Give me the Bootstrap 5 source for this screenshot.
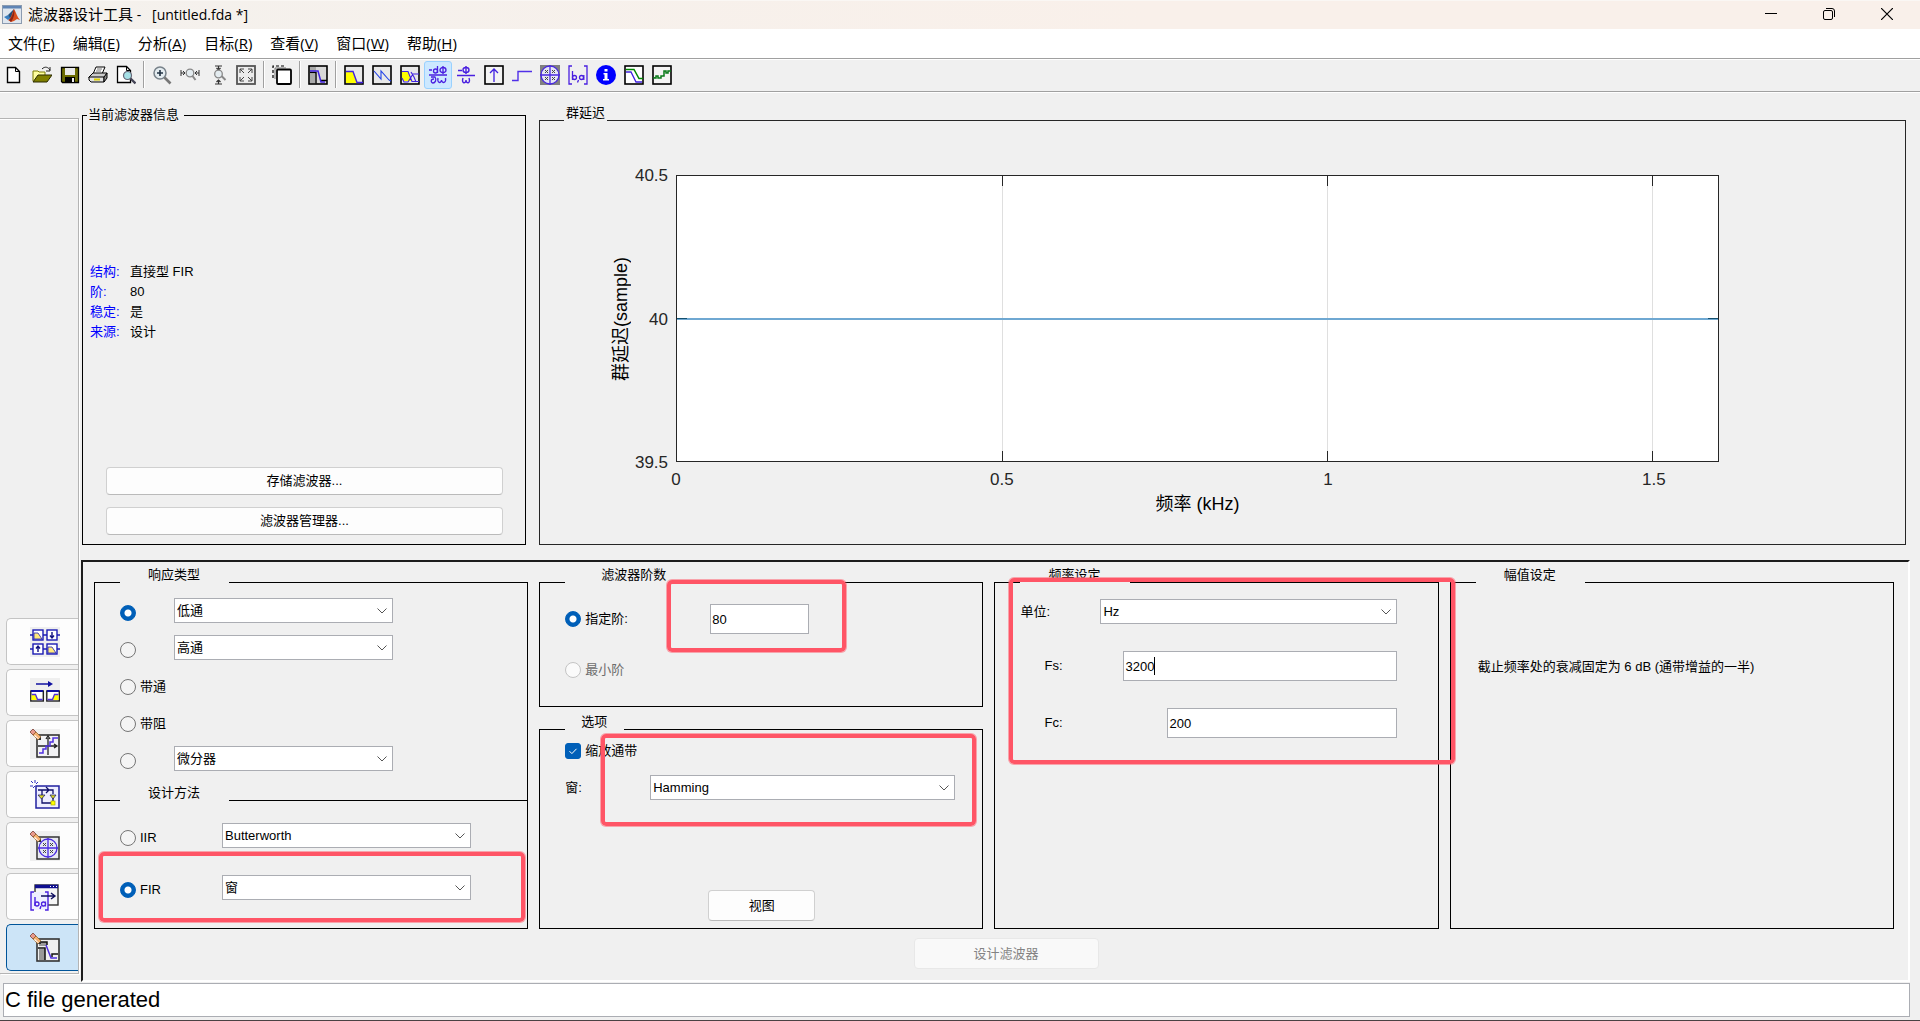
<!DOCTYPE html>
<html lang="zh-CN">
<head>
<meta charset="utf-8">
<meta name="viewport" content="width=device-width, initial-scale=1">
<title>滤波器设计工具 - [untitled.fda *]</title>
<link href="https://cdn.jsdelivr.net/npm/bootstrap@5.3.0/dist/css/bootstrap.min.css" rel="stylesheet">
<style>
:root { --face:#f0f0f0; --ink:#000; --edge:#abadb3; --accent:#005fb8; --mark:#ff5566; }
body { background:var(--face); color:var(--ink); font:13px/16px "Liberation Sans","Noto Sans CJK SC",sans-serif; }
svg { display:block; flex:none; }
.titlebar { height:29px; padding-left:2px; background:linear-gradient(90deg,#f4f1ed,#f9f0ea 60%); font:15px/24px "Open Sans","Noto Sans CJK SC",sans-serif; border-top:1px solid #faf7f4; }
.caption { padding:0 0 2px 6px; }
.caption span { font-size:14px; }
.win-btn { width:58px; height:28px; border:0; background:none; padding:0 0 2px; display:flex; align-items:center; justify-content:center; }
.menubar { height:29px; padding-left:8px; gap:18px; background:#fff; font:15px/29px "Open Sans","Noto Sans CJK SC",sans-serif; }
.menubar a { color:#000; text-decoration:none; }
.toolstrip { height:34px; border-top:1px solid #a0a0a0; border-bottom:1px solid #a0a0a0; box-shadow:inset 0 1px #fff, 0 1px #fff; padding-top:2px; margin-bottom:1px; }
.tool { width:28px; height:28px; padding:0 0 1px; border:1px solid transparent; border-radius:3px; background:none; display:flex; align-items:center; justify-content:center; }
.tool.active { background:#cce8ff; border-color:#99d1ff; }
.tool-sep { width:8px; height:27px; background:linear-gradient(#a0a0a0,#a0a0a0) 3px 0/1px 100% no-repeat, linear-gradient(#fff,#fff) 4px 0/1px 100% no-repeat; }
.rail { width:79px; margin:25px 2px 8px 0; padding:0 0 2px 6px; gap:4px; border:1px solid #b4b4b4; border-left:0; box-shadow:inset 0 1px #fff, 1px 1px #fff; }
.rail-btn { height:47px; padding:0 0 0 23px; border:1px solid #c4c4c4; border-right:0; border-radius:5px 0 0 5px; background:#fdfdfd; display:flex; align-items:center; }
.rail-btn.active { background:#cce4f7; border-color:#005499; }
fieldset.group { border:1px solid #000; display:flex; flex-direction:column; padding:0 0 0 25px; }
.group > legend { float:none; width:auto; margin:0; padding:0 29px 14px 28px; font-size:13px; line-height:14px; }
.group > legend.tight { padding-left:16px; padding-right:17px; }
.group > legend.wide { padding-left:36px; }
.top-row { padding:13px 14px 15px 1px; gap:13px; }
fieldset.info, fieldset.plot { padding:0; }
.info { flex:443 1 0; margin-top:2px; }
.info > legend { margin-left:4px; padding:0 5px 0 1px; }
.plot { flex:1368 1 0; border-color:#262626 !important; }
.plot > legend { margin-left:24px; padding:0 2px 14px 2px; }
.info dl { display:grid; grid-template-columns:40px 1fr; row-gap:4px; padding-left:7px; padding-top:14px; }
.info dt { font-weight:400; color:#00f; }
.push { border:1px solid #d0d0d0; border-bottom-color:#bababa; border-radius:4px; background:#fdfdfd; color:#000; font-size:13px; line-height:16px; height:28px; padding:0; }
.push.tall { height:31px; width:107px; margin-bottom:7px; }
.push.design { width:185px; height:31px; }
.push:disabled { background:#f9f9f9; border-color:#e8e8e8; color:#838383; opacity:1; }
.info-actions { gap:12px; padding:0 22px 9px 23px; }
.chart { padding:41px 186px 0 0; }
.y-side { width:136px; font-size:17px; line-height:20px; color:#262626; }
.y-title { writing-mode:vertical-rl; text-orientation:sideways; transform:rotate(180deg); font-size:18px; line-height:22px; color:#000; margin-left:70px; }
.y-ticks { margin:-9px 8px -11px 0; }
.axes { min-height:284px; background:#fff; border:1px solid #262626; }
.x-side { margin-left:136px; height:82px; font-size:17px; line-height:20px; color:#262626; }
.x-side .tick { position:absolute; top:8px; transform:translateX(-50%); }
.x-title { padding-top:31px; font-size:18px; line-height:22px; color:#000; text-align:center; }
.design-panel { border:2px solid #1c1c1c; border-right-color:#fff; border-bottom-color:#fff; margin-right:10px; padding:6px 14px 11px 11px; }
.groups { gap:11px; min-height:361px; }
.col-a { flex:433 1 433px; min-width:0; } .col-b { flex:443 1 443px; min-width:0; }
.response { height:232px; }
fieldset.response { border-bottom:0; }
.response .rows { padding-top:2px; }
.method { margin-top:-14px; flex:1 1 auto; }
.method .rows { padding-top:9px; }
.order { height:139px; }
.rows { display:grid; row-gap:12px; }
.rows.loose { row-gap:27px; }
.line { display:flex; align-items:flex-end; height:25px; }
.line .pick { margin-bottom:2px; }
.pick { display:flex; align-items:center; gap:4px; height:16px; width:54px; flex:none; }
.method .pick { width:102px; }
.pick.w-order { width:145px; }
.pick.off { color:#6d6d6d; margin-top:28px; } .pick.off label { opacity:1; }
.form-check-input.tick-in { width:16px; height:16px; margin:0; border:1px solid #757575; background-color:#f4f4f4; flex:none; }
.form-check-input.tick-in[type=radio]:checked { background:radial-gradient(circle,#fff 3px,var(--accent) 4px); border-color:var(--accent); }
.form-check-input.tick-in[type=checkbox]:checked { background-color:var(--accent); border-color:var(--accent); border-radius:3px; background-size:14px; background-image:url("data:image/svg+xml,%3Csvg xmlns='http://www.w3.org/2000/svg' viewBox='0 0 14 14'%3E%3Cpath d='M3.5 7.2l2.4 2.4 4.6-4.8' fill='none' stroke='white'/%3E%3C/svg%3E"); }
.form-check-input.tick-in:disabled { border-color:#c4c4c4; background:#fafafa; opacity:1; }
.form-select.drop { width:219px; height:25px; padding:0 22px 0 2px; border:1px solid var(--edge); border-radius:0; font-size:13px; line-height:16px; color:#000; background:#fff url("data:image/svg+xml,%3Csvg xmlns='http://www.w3.org/2000/svg' viewBox='0 0 10 6'%3E%3Cpath d='M.5.5l4.500 4.500 4.500-4.500' fill='none' stroke='%23555'/%3E%3C/svg%3E") right 5px center/10px 6px no-repeat; }
.form-select.drop.mid { width:249px; } .form-select.drop.big { width:305px; } .form-select.drop.fill { width:auto; flex:1 1 0; }
.form-control.box { height:30px; border:1px solid var(--edge); border-radius:0; padding:0 1px; font-size:13px; line-height:16px; color:#000; background:#fff; }
.box.short { width:99px; flex:none; }
.callout { position:absolute; border:4px solid var(--mark); border-radius:5px; box-shadow:0 0 0 1px #ff556680; pointer-events:none; z-index:2; }
.c-fir { left:4px; right:2px; top:38px; height:70px; }
.c-order { left:127px; width:179px; top:-16px; height:72px; }
.c-win { left:61px; right:6px; top:-9px; height:92px; }
.c-freq { left:14px; right:-17px; top:-18px; height:186px; }
.caret { position:absolute; left:31px; top:6px; width:1px; height:18px; background:#000; }
.freq { padding-right:41px !important; }
.freq .rows { padding-top:3px; }
.lab-win { width:85px; }
.lab-unit { width:80px; } .lab-fs { width:103px; padding-left:24px; } .lab-fc { width:147px; padding-left:24px; }
.note { padding:63px 0 0 2px; }
.design-actions { padding:9px 0 0 24px; }
.status { height:34px; margin:1px 10px 3px 3px; }
.status .box { height:34px; font-size:22px; line-height:26px; padding:0 1px; width:100%; }
.base { border-bottom:1px solid #4a4143; }
</style>
</head>
<body class="d-flex flex-column min-vh-100 base">

<svg width="0" height="0" class="position-absolute" aria-hidden="true">
  <defs>
    <g id="pencil"><path d="M0 3l3-3 3 3-3 3z" fill="#e89a8c" stroke="#7a4036" stroke-width=".8"/><path d="M3 6l3-3 5 5-3 3z" fill="#f4b070" stroke="#8a5a20" stroke-width=".7"/><path d="M4 7l1-1 5 5z" fill="#fff"/><path d="M8 11l3-3v3z" fill="#333"/></g>
    <g id="pz" fill="none" stroke="#4a2ae0"><circle cx="10" cy="10" r="9" fill="#e6e6f4" stroke-width="1.300"/><path d="M0 10h20M10 0v20" stroke-width="1.300"/><path d="M5 5l3 3M8 5l-3 3M12 5l3 3M15 5l-3 3M5 12l3 3M8 12l-3 3M12 12l3 3M15 12l-3 3" stroke="#444"/></g>
  </defs>
</svg>

<header>
  <div class="titlebar d-flex align-items-center">
    <svg width="20" height="20" viewBox="0 0 20 20"><rect x=".5" y=".5" width="19" height="18" fill="#dfe6ee" stroke="#8b9bb0"/><rect x="1" y="1" width="18" height="2.500" fill="#5f84b4"/><path d="M2 12l4-2 3 3-3 2z" fill="#3a7fc0"/><path d="M6 10l6-6-2 8-2 1z" fill="#24507c"/><path d="M12 4c2 3 3 8 6 11l-3-1-3 2-3 1-3-2c3-1 4-7 6-11z" fill="#d9501e"/><path d="M12 4c1 4 0 9-3 13l-2-2c3-2 4-7 5-11z" fill="#8c2416"/></svg>
    <div class="caption">滤波器设计工具<span> - &nbsp;&nbsp;[untitled.fda *]</span></div>
    <div class="ms-auto d-flex pe-1">
      <button class="win-btn" aria-label="最小化"><svg width="12" height="12" viewBox="0 0 12 12"><path d="M0 5.500h12" stroke="#000"/></svg></button>
      <button class="win-btn" aria-label="还原"><svg width="12" height="12" viewBox="0 0 12 12" fill="none" stroke="#000"><rect x=".5" y="2.500" width="9" height="9" rx="1.500"/><path d="M3 .5h6a2.500 2.500 0 0 1 2.500 2.500v6"/></svg></button>
      <button class="win-btn" aria-label="关闭"><svg width="12" height="12" viewBox="0 0 12 12"><path d="M0 0l12 12M12 0L0 12" stroke="#000" stroke-width="1.200"/></svg></button>
    </div>
  </div>
  <nav class="menubar d-flex">
    <a href="#">文件(<u>F</u>)</a><a href="#">编辑(<u>E</u>)</a><a href="#">分析(<u>A</u>)</a><a href="#">目标(<u>R</u>)</a><a href="#">查看(<u>V</u>)</a><a href="#">窗口(<u>W</u>)</a><a href="#">帮助(<u>H</u>)</a>
  </nav>
  <div class="toolstrip d-flex" role="toolbar" aria-label="工具栏">
    <button class="tool" aria-label="新建"><svg width="20" height="20" viewBox="0 0 20 20"><path d="M3.500 2.500h8l4 4v11h-12z" fill="#fff" stroke="#000" stroke-width="1.400"/><path d="M11.500 2.500v4h4" fill="none" stroke="#000"/></svg></button>
    <button class="tool" aria-label="打开"><svg width="20" height="20" viewBox="0 0 20 20"><path d="M1 16V6h5l1 1h6v3" fill="#ffffa0" stroke="#7a7a00"/><path d="M1 17l5-7h14l-5 7z" fill="#808000" stroke="#2a2a00"/><path d="M10 4c3-3 6-2 8 1M18 2v4h-4" fill="none" stroke="#222"/></svg></button>
    <button class="tool" aria-label="保存"><svg width="20" height="20" viewBox="0 0 20 20"><path d="M1.500 2.500h17v15h-16l-1-1z" fill="#6b6b00" stroke="#000" stroke-width="1.300"/><rect x="5" y="3" width="10" height="7" fill="#e8e8e8"/><rect x="5" y="12" width="10" height="6" fill="#000"/><rect x="12" y="13" width="2" height="4" fill="#eee"/></svg></button>
    <button class="tool" aria-label="打印"><svg width="20" height="20" viewBox="0 0 20 20" stroke="#000"><path d="M5 9l3-7h9l-3 7z" fill="#fff"/><path d="M9 4h5M8 6h5" stroke="#777"/><path d="M1 12l4-4h14l-3 5H1z" fill="#ccc"/><path d="M1 12h15v5H3l-2-2z" fill="#e2e2e2"/><path d="M16 12l3-4v5l-3 4z" fill="#888"/><path d="M6 14.500h6" stroke="#dcd000" stroke-width="2"/></svg></button>
    <button class="tool" aria-label="打印预览"><svg width="20" height="20" viewBox="0 0 20 20"><path d="M1.500 1.500h9l4 4v12h-13z" fill="#fff" stroke="#000" stroke-width="1.300"/><path d="M10.500 1.500v4h4" fill="none" stroke="#000"/><circle cx="11.500" cy="10.500" r="4" fill="#a5e0e6" stroke="#667" stroke-width="1.200"/><path d="M14.500 13.500l5 5" stroke="#445" stroke-width="2.400"/></svg></button>
    <span class="tool-sep"></span>
    <button class="tool" aria-label="放大"><svg width="20" height="20" viewBox="0 0 20 20"><circle cx="8" cy="8" r="6" fill="#e4ecf0" stroke="#78828a" stroke-width="1.500"/><path d="M8 5v6M5 8h6" stroke="#234" stroke-width="1.600"/><path d="M12.500 12.500l6 6" stroke="#777" stroke-width="2.600"/></svg></button>
    <button class="tool" aria-label="X 缩放"><svg width="20" height="20" viewBox="0 0 20 20"><path d="M1 5v6M19 5v6M1 8h4M15 8h4M3 6l2 2-2 2M17 6l-2 2 2 2" fill="none" stroke="#333"/><circle cx="10" cy="8" r="3.800" fill="#e4ecf0" stroke="#888" stroke-width="1.300"/><path d="M12.500 11l3 4" stroke="#888" stroke-width="2"/></svg></button>
    <button class="tool" aria-label="Y 缩放"><svg width="20" height="20" viewBox="0 0 20 20"><path d="M7 1h7M7 19h7M10.500 1v4M10.500 15v4M8.500 3l2 2 2-2M8.500 17l2-2 2 2" fill="none" stroke="#333" stroke-width="1.200"/><circle cx="10.500" cy="9" r="3.800" fill="#e4ecf0" stroke="#888" stroke-width="1.300"/><path d="M13.500 11l4 4" stroke="#888" stroke-width="2"/></svg></button>
    <button class="tool" aria-label="全视图"><svg width="20" height="20" viewBox="0 0 20 20"><rect x="1" y="1" width="18" height="18" fill="#ececec" stroke="#555" stroke-width="1.800"/><path d="M4 8V4h4M4 4l4 4M12 4h4v4M16 4l-4 4M4 12v4h4M4 16l4-4M16 12v4h-4M16 16l-4-4" fill="none" stroke="#444"/></svg></button>
    <span class="tool-sep"></span>
    <button class="tool" aria-label="复制"><svg width="20" height="20" viewBox="0 0 20 20"><path d="M1 13V1h12" fill="none" stroke="#000" stroke-width="1.200" stroke-dasharray="3 2"/><rect x="5" y="4.500" width="14" height="14.500" rx="1" fill="#fff" stroke="#000" stroke-width="1.800"/><path d="M3 14V3h11" fill="none" stroke="#555" stroke-width=".8"/></svg></button>
    <span class="tool-sep"></span>
    <button class="tool" aria-label="滤波器设定"><svg width="20" height="20" viewBox="0 0 20 20"><rect x="1" y="1" width="18" height="18" fill="#d8d8d8" stroke="#000" stroke-width="1.600"/><path d="M2 2h6v4H2zM2 9h5v9H2z" fill="#aaa"/><path d="M2 7.500h6v11M13 15.500h6" fill="none" stroke="#000" stroke-width="1.400"/><path d="M2 6h8l3 11h4" fill="none" stroke="#4020e0" stroke-width="1.500"/></svg></button>
    <span class="tool-sep"></span>
    <button class="tool" aria-label="幅值响应"><svg width="20" height="20" viewBox="0 0 20 20"><rect x="1" y="1" width="18" height="18" fill="#e8e8e8" stroke="#000" stroke-width="1.600"/><path d="M2 7h7l4 11H2z" fill="#ff0"/><path d="M2 6.500h7l4 11h6" fill="none" stroke="#4020e0" stroke-width="1.400"/></svg></button>
    <button class="tool" aria-label="相位响应"><svg width="20" height="20" viewBox="0 0 20 20"><rect x="1" y="1" width="18" height="18" fill="#e8e8e8" stroke="#000" stroke-width="1.600"/><path d="M2 6l7 8V6l8 9M9 14V7M17 15l2 1" fill="none" stroke="#2040e8" stroke-width="1.100"/></svg></button>
    <button class="tool" aria-label="幅值和相位响应"><svg width="20" height="20" viewBox="0 0 20 20"><rect x="1" y="1" width="18" height="18" fill="#e8e8e8" stroke="#000" stroke-width="1.600"/><path d="M2 7h6l4 9H4L2 13z" fill="#ff0"/><path d="M2 6.500h6l4 10h7M2 13l2 4h4l5-8h6M11 7l3 5 2 5" fill="none" stroke="#4020e0" stroke-width="1.100"/></svg></button>
    <button class="tool active" aria-label="群延迟响应"><svg width="20" height="20" viewBox="0 0 20 20" fill="none" stroke="#4a20e0" stroke-width="1.300"><path d="M1 10h18M1 5h3M9.500 1v7"/><circle cx="7.500" cy="6" r="2"/><ellipse cx="15" cy="5" rx="3" ry="2.500"/><path d="M15 1v8M3 12h4c2 3 0 6-2 6s-3-4 1-4M10 13c-1 5 3 6 3.500 2 .5 4 5 3 4-2"/></svg></button>
    <button class="tool" aria-label="相位延迟"><svg width="20" height="20" viewBox="0 0 20 20" fill="none" stroke="#4a20e0" stroke-width="1.400"><path d="M1 10.500h18M2 5.500h4M10 1v8"/><ellipse cx="10" cy="5" rx="3" ry="2.500"/><path d="M7 13c-2 6 3 6 3 2 0 4 5 4 3-2"/></svg></button>
    <button class="tool" aria-label="冲激响应"><svg width="20" height="20" viewBox="0 0 20 20"><rect x="1" y="1" width="18" height="18" fill="#f4f4f4" stroke="#000" stroke-width="1.600"/><path d="M10 17V4M6 8l4-4 4 4" fill="none" stroke="#4020e0" stroke-width="1.300"/></svg></button>
    <button class="tool" aria-label="阶跃响应"><svg width="20" height="20" viewBox="0 0 20 20"><path d="M0 15.500h6v-9h14" fill="none" stroke="#5030e8" stroke-width="1.400"/></svg></button>
    <button class="tool" aria-label="零极点图"><svg width="20" height="20" viewBox="0 0 20 20"><rect width="20" height="20" fill="#808080"/><use href="#pz"/></svg></button>
    <button class="tool" aria-label="滤波器系数"><svg width="20" height="20" viewBox="0 0 20 20" fill="none" stroke="#4a20e0" stroke-width="1.300"><path d="M4 1H1v18h3M16 1h3v18h-3M4.500 6v9M10.500 15l-1 2.500"/><circle cx="6.500" cy="12.500" r="2"/><circle cx="13.500" cy="12.500" r="2"/><path d="M15.800 10v5"/></svg></button>
    <button class="tool" aria-label="滤波器信息"><svg width="20" height="20" viewBox="0 0 20 20"><circle cx="10" cy="10" r="10" fill="#00f"/><path d="M8.500 4h3v2.500h-3zM7.500 8h4v6h1.500v1.500h-6V14h1.500V9.500H7.500z" fill="#fff"/></svg></button>
    <button class="tool" aria-label="幅值响应估计"><svg width="20" height="20" viewBox="0 0 20 20"><rect x="1" y="1" width="18" height="18" fill="#fff" stroke="#000" stroke-width="1.600"/><path d="M2 7h5l5 10h6" fill="none" stroke="#4020e0" stroke-width="1.300"/><path d="M2 4.500h8l5 9h4" fill="none" stroke="#080" stroke-width="1.500"/></svg></button>
    <button class="tool" aria-label="舍入噪声"><svg width="20" height="20" viewBox="0 0 20 20"><rect x="1" y="1" width="18" height="18" fill="#f4f4f4" stroke="#000" stroke-width="1.600"/><path d="M2 12v1h2v-2h2v2h3v-2h3V6h2v2h2V6h3" fill="none" stroke="#087a18" stroke-width="1.500"/></svg></button>
  </div>
</header>

<main class="d-flex flex-grow-1">
  <nav class="rail d-flex flex-column justify-content-end flex-shrink-0" aria-label="侧栏">
    <button class="rail-btn" aria-label="创建多速率滤波器"><svg width="30" height="30" viewBox="0 0 30 30"><rect width="30" height="30" fill="#efefef"/><path d="M0 8h30M0 22h30" stroke="#1c1cb4" stroke-width="1.300"/><g fill="#fff" stroke="#1c1cb4" stroke-width="1.400"><rect x="3" y="3" width="10" height="10"/><rect x="17" y="3" width="10" height="10"/><rect x="3" y="17" width="10" height="10"/><rect x="17" y="17" width="10" height="10"/></g><path d="M4 6h4l4 6H4zM18 20h4l4 6h-8z" fill="#ffe97a" stroke="#1c1cb4" stroke-width=".8"/><path d="M22 5v6M20 8.500l2 2.500 2-2.500M8 25v-6M6 21.500L8 19l2 2.500" fill="none" stroke="#101080" stroke-width="1.400"/></svg></button>
    <button class="rail-btn" aria-label="变换滤波器"><svg width="30" height="30" viewBox="0 0 30 30"><rect width="30" height="30" fill="#efefef"/><path d="M6 6h14" stroke="#1010a0" stroke-width="1.500"/><path d="M18 3l5 3-5 3z" fill="#1010a0"/><rect x=".8" y="13" width="12.500" height="10" fill="#fff" stroke="#222" stroke-width="1.400"/><rect x="16.800" y="13" width="12.500" height="10" fill="#fff" stroke="#222" stroke-width="1.400"/><path d="M1 13h12M17 13h12" stroke="#1010a0" stroke-width="2"/><path d="M1.500 16h4l3 6h-7zM28.500 16h-4l-3 6h7z" fill="#ff0"/><path d="M1.500 16.500h4l2 5h5M28.500 16.500h-4l-2 5h-5" fill="none" stroke="#5030e0" stroke-width="1.300"/></svg></button>
    <button class="rail-btn" aria-label="设置量化参数"><svg width="30" height="30" viewBox="0 0 30 30"><rect width="30" height="30" fill="#efefef"/><rect x="7" y="6" width="22" height="22" fill="#f2f2f4" stroke="#333" stroke-width="1.600"/><path d="M8 17h18M18 26V9M24 15l3 2-3 2M16 10l2-3 2 3" fill="none" stroke="#222" stroke-width="1.300"/><path d="M9 24h4v-4h3v-3h4v-4h3v-4h5" fill="none" stroke="#5030e0" stroke-width="1.500"/><use href="#pencil"/></svg></button>
    <button class="rail-btn" aria-label="实现模型"><svg width="30" height="30" viewBox="0 0 30 30"><path d="M1 1l2 2M5 0v3M0 6h3M8 2L6 4M3 8l2-2" stroke="#3030c0"/><rect x="6" y="6" width="23" height="22" fill="#eef" stroke="#2020a0" stroke-width="1.500"/><path d="M8 10h15v4M12 10v13h10M16 7l3 3-3 3M23 16v6" fill="none" stroke="#10106a" stroke-width="1.300"/><path d="M8 15h7l-3.500 4zM20 15h6l-3 4z" fill="#dcd820" stroke="#10106a" stroke-width=".7"/><rect x="21" y="21" width="4" height="4" fill="#ff0" stroke="#aa0" stroke-width=".7"/></svg></button>
    <button class="rail-btn" aria-label="零极点编辑器"><svg width="30" height="30" viewBox="0 0 30 30"><rect width="30" height="30" fill="#efefef"/><rect x="7" y="6" width="22" height="22" fill="#e8e8f0" stroke="#333" stroke-width="1.500"/><use href="#pz" x="8" y="7"/><use href="#pencil"/></svg></button>
    <button class="rail-btn" aria-label="导入滤波器"><svg width="30" height="30" viewBox="0 0 30 30"><rect x="5" y="3" width="23" height="20" fill="#f6f6f6" stroke="#333" stroke-width="1.400"/><path d="M5 4.500h23" stroke="#101090" stroke-width="3.500"/><path d="M20 4.500h1M23 4.500h1M26 4.500h1" stroke="#fff"/><rect x="1" y="10" width="17" height="18" fill="#efefff"/><path d="M4 10H1v18h3M15 10h3v18h-3M5 15v9M11 24l-1 3" fill="none" stroke="#4a20e0" stroke-width="1.400"/><circle cx="7" cy="22" r="2" fill="none" stroke="#4a20e0" stroke-width="1.300"/><circle cx="13.500" cy="22" r="2" fill="none" stroke="#4a20e0" stroke-width="1.300"/><path d="M15.600 19.500v5" stroke="#4a20e0"/><path d="M11 14h13M21 11l4 3-4 3" fill="none" stroke="#101060" stroke-width="1.400"/></svg></button>
    <button class="rail-btn active" aria-label="设计滤波器"><svg width="30" height="30" viewBox="0 0 30 30"><rect x="7" y="6" width="22" height="22" fill="#f0f0f0" stroke="#333" stroke-width="1.600"/><path d="M9 9h8v4H9zM9 16h6v11H9z" fill="#999"/><path d="M8 15h7v12M22 24v-3h6" fill="none" stroke="#111" stroke-width="1.500"/><path d="M9 9h8v3" fill="none" stroke="#111" stroke-width="1.500"/><path d="M16 12l5 13h6" fill="none" stroke="#5030e0" stroke-width="1.500"/><use href="#pencil"/></svg></button>
  </nav>

  <div class="d-flex flex-column flex-grow-1">
    <div class="top-row d-flex flex-grow-1">
      <fieldset class="group info">
        <legend>当前滤波器信息</legend>
        <div class="d-flex flex-column flex-grow-1">
          <dl class="my-auto">
            <dt>结构:</dt><dd class="m-0">直接型 FIR</dd>
            <dt>阶:</dt><dd class="m-0">80</dd>
            <dt>稳定:</dt><dd class="m-0">是</dd>
            <dt>来源:</dt><dd class="m-0">设计</dd>
          </dl>
          <div class="info-actions d-grid">
            <button class="push">存储滤波器...</button>
            <button class="push">滤波器管理器...</button>
          </div>
        </div>
      </fieldset>

      <fieldset class="group plot">
        <legend>群延迟</legend>
        <div class="chart d-flex flex-column flex-grow-1">
          <div class="d-flex flex-grow-1">
            <div class="y-side d-flex justify-content-between flex-shrink-0">
              <div class="y-title text-center">群延迟(sample)</div>
              <div class="y-ticks d-flex flex-column justify-content-between text-end"><span>40.5</span><span>40</span><span>39.5</span></div>
            </div>
            <div class="axes flex-grow-1 position-relative">
              <svg class="position-absolute top-0 start-0 w-100 h-100" shape-rendering="crispEdges">
                <g stroke="#dfdfdf"><line x1="31.25%" x2="31.25%" y1="0" y2="100%"/><line x1="62.5%" x2="62.5%" y1="0" y2="100%"/><line x1="93.75%" x2="93.75%" y1="0" y2="100%"/></g>
                <line x1="0" x2="100%" y1="50%" y2="50%" stroke="#6fa8d2" stroke-width="2"/>
                <g stroke="#262626">
                  <line x1="31.25%" x2="31.25%" y1="0" y2="10"/><line x1="62.5%" x2="62.5%" y1="0" y2="10"/><line x1="93.75%" x2="93.75%" y1="0" y2="10"/>
                  <svg y="100%" overflow="visible"><line x1="31.25%" x2="31.25%" y1="-10" y2="0"/><line x1="62.5%" x2="62.5%" y1="-10" y2="0"/><line x1="93.75%" x2="93.75%" y1="-10" y2="0"/></svg>
                  <line x1="0" x2="10" y1="50%" y2="50%" stroke="#14506e"/>
                  <svg x="100%" overflow="visible"><line x1="-10" x2="0" y1="50%" y2="50%" stroke="#14506e"/></svg>
                </g>
              </svg>
            </div>
          </div>
          <div class="x-side position-relative">
            <span class="tick" style="left:0%">0</span><span class="tick" style="left:31.25%">0.5</span><span class="tick" style="left:62.5%">1</span><span class="tick" style="left:93.75%">1.5</span>
            <div class="x-title">频率 (kHz)</div>
          </div>
        </div>
      </fieldset>
    </div>

    <form class="design-panel d-flex flex-column">
      <div class="groups d-flex">
        <div class="col-a d-flex flex-column">
          <fieldset class="group response">
            <legend>响应类型</legend>
            <div class="rows">
              <div class="line"><div class="pick"><input class="form-check-input tick-in" type="radio" name="resp" aria-label="低通" checked></div><select class="form-select drop" aria-label="低通类型"><option>低通</option></select></div>
              <div class="line"><div class="pick"><input class="form-check-input tick-in" type="radio" name="resp" aria-label="高通"></div><select class="form-select drop" aria-label="高通类型"><option>高通</option></select></div>
              <div class="line"><div class="pick"><input class="form-check-input tick-in" type="radio" name="resp" id="bp"><label for="bp">带通</label></div></div>
              <div class="line"><div class="pick"><input class="form-check-input tick-in" type="radio" name="resp" id="bs"><label for="bs">带阻</label></div></div>
              <div class="line"><div class="pick"><input class="form-check-input tick-in" type="radio" name="resp" aria-label="微分器"></div><select class="form-select drop" aria-label="其他类型"><option>微分器</option></select></div>
            </div>
          </fieldset>
          <fieldset class="group method position-relative">
            <legend>设计方法</legend>
            <div class="rows loose">
              <div class="line"><div class="pick"><input class="form-check-input tick-in" type="radio" name="meth" id="iir"><label for="iir">IIR</label></div><select class="form-select drop mid" aria-label="IIR 方法"><option>Butterworth</option></select></div>
              <div class="line"><div class="pick"><input class="form-check-input tick-in" type="radio" name="meth" id="fir" checked><label for="fir">FIR</label></div><select class="form-select drop mid" aria-label="FIR 方法"><option>窗</option></select></div>
            </div>
            <div class="callout c-fir"></div>
          </fieldset>
        </div>

        <div class="col-b d-flex flex-column">
          <fieldset class="group order position-relative">
            <legend class="wide">滤波器阶数</legend>
            <div class="d-flex align-items-center pt-2">
              <div class="pick w-order"><input class="form-check-input tick-in" type="radio" name="ord" id="ordn" checked><label for="ordn">指定阶:</label></div>
              <input class="form-control box short" type="text" value="80" aria-label="阶数">
            </div>
            <div class="pick w-order off"><input class="form-check-input tick-in" type="radio" name="ord" id="ordm" disabled><label for="ordm">最小阶</label></div>
            <div class="callout c-order"></div>
          </fieldset>
          <fieldset class="group position-relative flex-grow-1 mt-2">
            <legend class="tight">选项</legend>
            <div class="pick w-order"><input class="form-check-input tick-in" type="checkbox" id="scale" checked><label for="scale">缩放通带</label></div>
            <div class="d-flex align-items-center pt-3">
              <label class="lab-win" for="win">窗:</label>
              <select class="form-select drop big" id="win"><option>Hamming</option></select>
            </div>
            <div class="d-flex justify-content-center mt-auto pe-4"><button type="button" class="push tall">视图</button></div>
            <div class="callout c-win"></div>
          </fieldset>
        </div>

        <fieldset class="group col-b position-relative freq">
          <legend>频率设定</legend>
          <div class="rows loose">
            <div class="d-flex align-items-center"><label class="lab-unit" for="unit">单位:</label><select class="form-select drop fill" id="unit"><option>Hz</option></select></div>
            <div class="d-flex align-items-center"><label class="lab-fs" for="fs">Fs:</label><div class="flex-grow-1 position-relative"><input class="form-control box" id="fs" type="text" value="3200"><span class="caret"></span></div></div>
            <div class="d-flex align-items-center"><label class="lab-fc" for="fc">Fc:</label><div class="flex-grow-1"><input class="form-control box" id="fc" type="text" value="200"></div></div>
          </div>
          <div class="callout c-freq"></div>
        </fieldset>

        <fieldset class="group col-b">
          <legend>幅值设定</legend>
          <p class="note m-0">截止频率处的衰减固定为 6 dB (通带增益的一半)</p>
        </fieldset>
      </div>
      <div class="design-actions d-flex justify-content-center"><button type="button" class="push design" disabled>设计滤波器</button></div>
    </form>
  </div>
</main>

<footer class="status"><input class="form-control box" type="text" value="C file generated" aria-label="状态" readonly></footer>
</body>
</html>
